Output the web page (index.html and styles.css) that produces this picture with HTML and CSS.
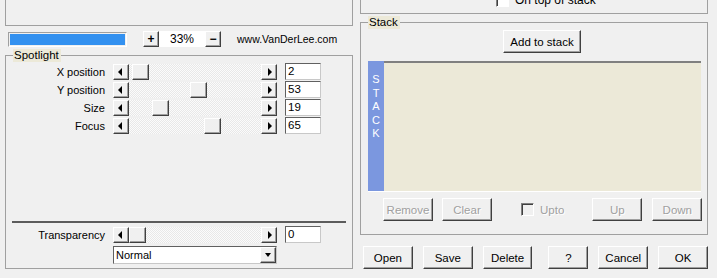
FILE: index.html
```html
<!DOCTYPE html>
<html lang="en">
<head>
  <meta charset="UTF-8" />
  <title>Spotlight</title>
  <link rel="stylesheet" href="styles.css">
</head>
<body>
  <div class="main">
    <div class="col">
      <div class="topbox"></div>

      <div class="zoom-row">
        <div class="progress"><div class="progress-fill"></div></div>
        <button class="tiny">+</button>
        <div class="zoom-val">33%</div>
        <button class="tiny">&minus;</button>
        <span class="site">www.VanDerLee.com</span>
      </div>

      <div class="group spot">
        <span class="legend">Spotlight</span>
        <div class="sliders">
          <label>X position</label>
          <div class="scroll"><span class="arrow"><i class="tri-l"></i></span><div class="track"><span class="thumb" style="margin-left:3px"></span></div><span class="arrow"><i class="tri-r"></i></span></div>
          <div class="edit">2</div>

          <label>Y position</label>
          <div class="scroll"><span class="arrow"><i class="tri-l"></i></span><div class="track"><span class="thumb" style="margin-left:61px"></span></div><span class="arrow"><i class="tri-r"></i></span></div>
          <div class="edit">53</div>

          <label>Size</label>
          <div class="scroll"><span class="arrow"><i class="tri-l"></i></span><div class="track"><span class="thumb" style="margin-left:23px"></span></div><span class="arrow"><i class="tri-r"></i></span></div>
          <div class="edit">19</div>

          <label>Focus</label>
          <div class="scroll"><span class="arrow"><i class="tri-l"></i></span><div class="track"><span class="thumb" style="margin-left:75px"></span></div><span class="arrow"><i class="tri-r"></i></span></div>
          <div class="edit">65</div>
        </div>

        <div class="separator"></div>

        <div class="sliders trans">
          <label>Transparency</label>
          <div class="scroll"><span class="arrow"><i class="tri-l"></i></span><div class="track"><span class="thumb" style="margin-left:0px"></span></div><span class="arrow"><i class="tri-r"></i></span></div>
          <div class="edit">0</div>

          <div class="combo"><span class="combo-text">Normal</span><span class="arrow"><i class="tri-d"></i></span></div>
        </div>
      </div>
    </div>

    <div class="col">
      <div class="topbox small">
        <div class="check-row"><span class="check"></span><span>On top of stack</span></div>
      </div>

      <div class="group stack">
        <span class="legend">Stack</span>
        <button class="btn add">Add to stack</button>
        <div class="stack-list">
          <div class="stack-strip">S<br>T<br>A<br>C<br>K</div>
          <div class="stack-items"></div>
        </div>
        <div class="stack-btns">
          <button class="btn off">Remove</button>
          <button class="btn off clear">Clear</button>
          <span class="upto"><span class="check dis"></span>Upto</span>
          <button class="btn off up">Up</button>
          <button class="btn off">Down</button>
        </div>
      </div>

      <div class="bottom-btns">
        <button class="btn">Open</button>
        <button class="btn">Save</button>
        <button class="btn">Delete</button>
        <button class="btn help">?</button>
        <button class="btn">Cancel</button>
        <button class="btn">OK</button>
      </div>
    </div>
  </div>
</body>
</html>
```

FILE: styles.css
```css
body {
  margin: 0;
  width: 717px;
  height: 278px;
  overflow: hidden;
  background-color: #f0f0f0;
  font-family: "Liberation Sans", Arial, sans-serif;
  font-size: 11px;
  color: #000;
}
.main {
  display: flex;
  gap: 7px;
  padding-left: 5px;
}
.col {
  width: 348px;
  display: flex;
  flex-direction: column;
}
.topbox {
  box-sizing: border-box;
  height: 26px;
  border: 1px solid #a0a0a0;
  border-top: none;
  overflow: hidden;
}
.topbox.small {
  height: 14px;
}
.check-row {
  display: flex;
  align-items: center;
  gap: 6px;
  margin-top: -7px;
  margin-left: 135px;
  font-size: 12px;
}
.check {
  box-sizing: border-box;
  width: 13px;
  height: 13px;
  background: #fff;
  border: 1px solid;
  border-color: #808080 #fff #fff #808080;
  box-shadow: inset 1px 1px #404040;
}
.check.dis {
  background: #f0f0f0;
}

/* zoom row */
.zoom-row {
  display: flex;
  align-items: center;
  margin-top: 5px;
  height: 16px;
}
.progress {
  box-sizing: border-box;
  width: 119px;
  height: 15px;
  margin-left: 3px;
  border: 1px solid;
  border-color: #a0a0a0 #fff #fff #a0a0a0;
  padding: 1px;
}
.progress-fill {
  height: 100%;
  background: #3391f0;
}
.tiny {
  box-sizing: border-box;
  width: 16px;
  height: 16px;
  padding: 0;
  background: #f0f0f0;
  border: 1px solid;
  border-color: #fff #404040 #404040 #fff;
  box-shadow: inset -1px -1px #a0a0a0;
  font-family: inherit;
  font-size: 12px;
  font-weight: bold;
  line-height: 12px;
}
.zoom-row .tiny:first-of-type {
  margin-left: 16px;
}
.zoom-val {
  width: 46px;
  height: 16px;
  line-height: 16px;
  background: #fff;
  text-align: center;
  font-size: 12px;
}
.site {
  margin-left: 16px;
  font-size: 10.5px;
}

/* group boxes */
.group {
  position: relative;
  box-sizing: border-box;
  border: 1px solid #a0a0a0;
}
.legend {
  position: absolute;
  top: -7px;
  left: 7px;
  padding: 0 2px 0 1px;
  line-height: 13px;
  background: #ece9d8;
  font-size: 11.5px;
}
.spot {
  margin-top: 8px;
  height: 214px;
  display: flex;
  flex-direction: column;
  padding: 7px 0 5px;
}
.sliders {
  display: grid;
  grid-template-columns: 99px 164px 36px;
  grid-auto-rows: 17px;
  column-gap: 8px;
  row-gap: 1px;
  align-items: center;
}
.sliders label {
  text-align: right;
  font-size: 11px;
}
.scroll {
  display: flex;
  height: 16px;
}
.arrow {
  box-sizing: border-box;
  width: 16px;
  height: 16px;
  flex: none;
  display: flex;
  align-items: center;
  justify-content: center;
  background: #f0f0f0;
  border: 1px solid;
  border-color: #fff #404040 #404040 #fff;
  box-shadow: inset -1px -1px #a0a0a0;
}
.tri-l, .tri-r, .tri-d {
  width: 0;
  height: 0;
  border-style: solid;
  border-color: transparent;
}
.tri-l {
  border-width: 4px 4px 4px 0;
  border-right-color: #000;
  margin-left: -2px;
}
.tri-r {
  border-width: 4px 0 4px 4px;
  border-left-color: #000;
  margin-left: 1px;
}
.tri-d {
  border-width: 4px 3.5px 0 3.5px;
  border-top-color: #000;
}
.track {
  flex: 1;
  display: flex;
  background: repeating-conic-gradient(#fbfbfb 0 25%, #e8e8e8 0 50%) 0 0 / 2px 2px;
}
.thumb {
  box-sizing: border-box;
  width: 17px;
  height: 16px;
  background: #f0f0f0;
  border: 1px solid;
  border-color: #fff #404040 #404040 #fff;
  box-shadow: inset -1px -1px #a0a0a0;
}
.edit {
  box-sizing: border-box;
  height: 17px;
  background: #fff;
  border: 1px solid;
  border-color: #606060 #c8c8c8 #c8c8c8 #606060;
  padding-left: 2px;
  font-size: 11.5px;
  line-height: 15px;
}
.separator {
  margin: auto 6px 3px;
  height: 2px;
  background: #5c5c5c;
}
.trans {
  row-gap: 3px;
}
.combo {
  grid-column: 2;
  box-sizing: border-box;
  width: 164px;
  height: 18px;
  display: flex;
  align-items: center;
  background: #fff;
  border: 1px solid;
  border-color: #606060 #c8c8c8 #c8c8c8 #606060;
}
.combo-text {
  flex: 1;
  padding-left: 2px;
  font-size: 11px;
}

/* stack */
.stack {
  margin-top: 8px;
  height: 213px;
  padding: 7px 0 0;
}
.btn {
  box-sizing: border-box;
  width: 50px;
  height: 23px;
  padding: 0;
  background: #f0f0f0;
  border: 1px solid;
  border-color: #fff #404040 #404040 #fff;
  box-shadow: inset -1px -1px #a0a0a0;
  font-family: inherit;
  font-size: 11.5px;
  color: #000;
}
.btn.add {
  display: block;
  width: 78px;
  margin-left: 142px;
}
.btn.off {
  color: #a0a0a0;
  text-shadow: 1px 1px #fff;
}
.stack-list {
  box-sizing: border-box;
  display: flex;
  width: 333px;
  height: 131px;
  margin: 8px 0 0 7px;
  border-top: 2px solid #808080;
  border-bottom: 1px solid #fff;
}
.stack-strip {
  width: 16px;
  background: #7b97df;
  color: #fff;
  text-align: center;
  font-size: 11px;
  line-height: 13.5px;
  padding-top: 12px;
  margin-top: -2px;
}
.stack-items {
  flex: 1;
  background: #ece9d8;
}
.stack-btns {
  display: flex;
  align-items: center;
  margin: 6px 0 0 22px;
}
.btn.clear {
  margin-left: 9px;
}
.upto {
  display: flex;
  align-items: center;
  gap: 6px;
  margin-left: 29px;
  color: #a0a0a0;
  text-shadow: 1px 1px #fff;
  font-size: 11.5px;
}
.btn.up {
  margin-left: 28px;
  margin-right: 10px;
}
.bottom-btns {
  display: flex;
  gap: 10px;
  margin: 11px 0 0 3px;
}
.btn.help {
  width: 40px;
  margin-left: 6px;
}
```
